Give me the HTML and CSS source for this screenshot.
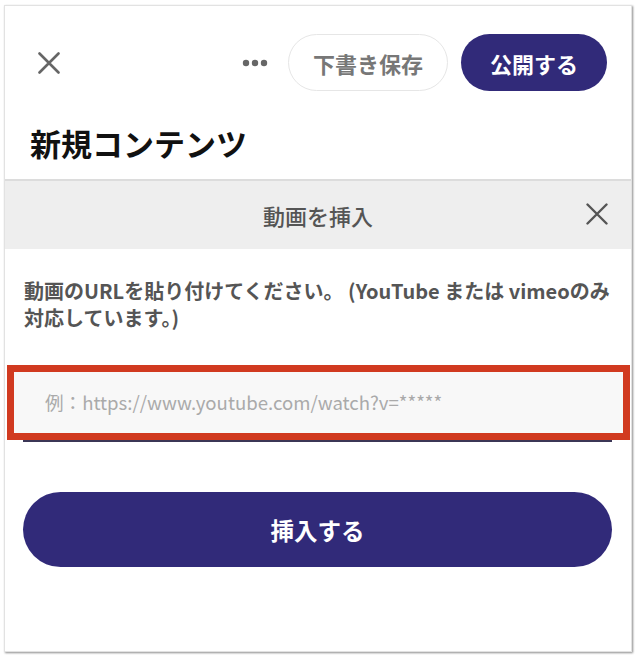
FILE: index.html
```
<!DOCTYPE html>
<html lang="ja">
<head>
<meta charset="utf-8">
<title>新規コンテンツ</title>
<link rel="stylesheet" href="styles.css">
</head>
<body>
<div class="card">
  <div class="topbar">
    <button class="icon-btn close-top" aria-label="閉じる">
      <svg width="22" height="22" viewBox="0 0 22 22"><path d="M1.5 1.5 L20.5 20.5 M20.5 1.5 L1.5 20.5" stroke="#666" stroke-width="2.6" stroke-linecap="round" fill="none"/></svg>
    </button>
    <div class="spacer"></div>
    <button class="icon-btn more" aria-label="その他">
      <svg width="26" height="8" viewBox="0 0 26 8"><circle cx="4" cy="4" r="3.2" fill="#666"/><circle cx="13" cy="4" r="3.2" fill="#666"/><circle cx="22" cy="4" r="3.2" fill="#666"/></svg>
    </button>
    <button class="pill draft">下書き保存</button>
    <button class="pill publish">公開する</button>
  </div>

  <h1 class="title">新規コンテンツ</h1>

  <div class="modal-head">
    <span class="modal-title">動画を挿入</span>
    <button class="icon-btn modal-close" aria-label="閉じる">
      <svg width="22" height="22" viewBox="0 0 22 22"><path d="M1.5 1.5 L20.5 20.5 M20.5 1.5 L1.5 20.5" stroke="#555" stroke-width="2.4" stroke-linecap="round" fill="none"/></svg>
    </button>
  </div>

  <p class="desc">動画のURLを貼り付けてください。 (YouTube または vimeoのみ<br>対応しています。)</p>

  <div class="field-annot">
    <div class="field">例：https://www.youtube.com/watch?v=*****</div>
  </div>
  <div class="field-line"></div>

  <button class="insert">挿入する</button>
</div>
</body>
</html>
```
FILE: styles.css
```
* { box-sizing: border-box; }
html, body { margin: 0; padding: 0; background: #fff; }
body {
  font-family: "Noto Sans CJK JP", "Noto Sans", sans-serif;
  width: 642px;
  height: 664px;
  overflow: hidden;
}
.card {
  margin: 5px 0 0 4px;
  width: 628px;
  height: 647px;
  background: #fff;
  border: 1px solid #e2e2e2;
  box-shadow: 1px 1px 2px rgba(0,0,0,0.45);
  display: flex;
  flex-direction: column;
}
.icon-btn {
  background: none;
  border: 0;
  padding: 0;
  display: flex;
  align-items: center;
  justify-content: center;
  cursor: pointer;
}
.topbar {
  display: flex;
  align-items: center;
  height: 57px;
  margin-top: 28px;
  padding: 0 24px 0 33px;
}
.spacer { flex: 1; }
.more { margin-right: 20px; }
.pill {
  height: 57px;
  border-radius: 29px;
  font-family: inherit;
  font-size: 22px;
  font-weight: 700;
  padding: 0;
  display: flex;
  align-items: center;
  justify-content: center;
}
.draft {
  width: 160px;
  background: #fff;
  border: 1.5px solid #e6e6e6;
  color: #777;
  margin-right: 13px;
}
.publish {
  width: 146px;
  background: #312a79;
  border: 0;
  color: #fff;
}
.title {
  margin: 32px 0 16px;
  padding-left: 25px;
  font-size: 31px;
  line-height: 40px;
  font-weight: 700;
  color: #111;
}
.modal-head {
  height: 70px;
  background: #eeeeee;
  border-top: 2px solid #dcdcdc;
  display: flex;
  align-items: center;
  justify-content: center;
  position: relative;
}
.modal-title {
  font-size: 22px;
  font-weight: 500;
  color: #555;
}
.modal-close {
  position: absolute;
  right: 23px;
  top: 22px;
}
.desc {
  margin: 28px 0 0;
  padding: 0 6px 0 19px;
  font-size: 20px;
  line-height: 27px;
  font-weight: 700;
  color: #555;
  white-space: nowrap;
}
.field-annot {
  margin: 34px 1px 0 2px;
  border: 7px solid #d13a20;
  height: 75px;
}
.field {
  height: 100%;
  background: #f8f8f8;
  display: flex;
  align-items: center;
  padding-left: 31px;
  font-size: 18.6px;
  color: #aaa;
  padding-bottom: 2px;
}
.field-line {
  height: 2px;
  margin: 0 19px 0 18px;
  background: #3b3656;
}
.insert {
  margin: 50px 19px 0 18px;
  height: 75px;
  border-radius: 38px;
  background: #312a79;
  border: 0;
  color: #fff;
  font-family: inherit;
  font-size: 23.5px;
  font-weight: 700;
  padding: 0;
}
```
